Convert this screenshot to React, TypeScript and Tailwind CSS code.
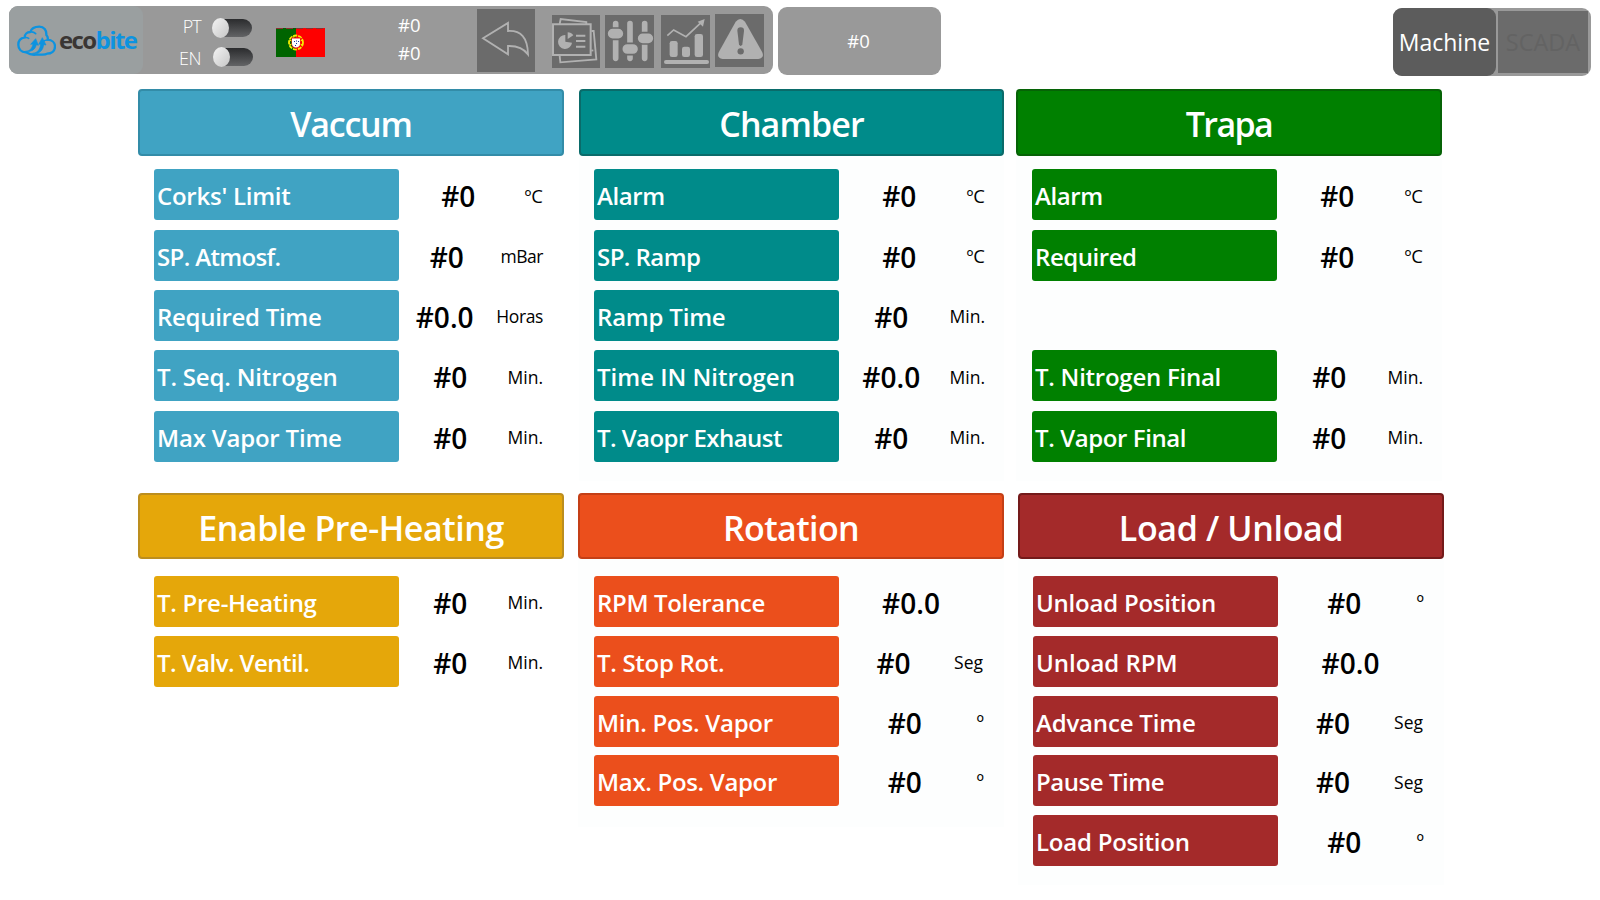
import type { ReactNode } from "react";

type Row = { label: string; track?: string; value: string; unit?: string; unitTrack?: string } | null;

type PanelProps = {
  title: string;
  titleTrack: string;
  size: string;
  header: string;
  fill: string;
  list: string;
  rows: Row[];
};

function Panel({ title, titleTrack, size, header, fill, list, rows }: PanelProps) {
  return (
    <section className={`shrink-0 ${size}`}>
      <h2
        className={`flex items-center justify-center rounded-[4px] border-2 pt-[3px] text-[34px] leading-none font-semibold text-white ${header}`}
      >
        <span className={titleTrack}>{title}</span>
      </h2>
      <div className={`flex flex-col ${list}`}>
        {rows.map((row, i) =>
          row ? (
            <div key={i} className="flex h-[51px] items-center">
              <div
                className={`flex h-full w-[245px] shrink-0 items-center rounded-[3px] pt-[3px] pl-[3px] text-[24px] leading-none font-semibold whitespace-nowrap text-white ${fill}`}
              >
                <span className={row.track}>{row.label}</span>
              </div>
              <div className="flex-1 pt-[3px] text-center text-[28px] leading-none font-semibold">{row.value}</div>
              {row.unit && (
                <div className="pt-[3px] pl-[6px] text-[17.5px] leading-none whitespace-nowrap">
                  <span className={row.unitTrack}>{row.unit}</span>
                </div>
              )}
            </div>
          ) : (
            <div key={i} className="h-[51px]" />
          ),
        )}
      </div>
    </section>
  );
}

function Toggle() {
  return (
    <span className="relative block h-[20px] w-[40px]">
      <span className="absolute inset-y-px right-0 left-[2px] rounded-[9px] bg-linear-to-b from-[#2b2c2e] to-[#636466]" />
      <span className="absolute top-0 left-0 h-[20px] w-[17px] rounded-[50%] bg-linear-to-br from-[#f4f4f4] to-[#c6c6c6]" />
    </span>
  );
}

function IconButton({ className, children }: { className: string; children: ReactNode }) {
  return <button className={`shrink-0 bg-[#6b6b6b] ${className}`}>{children}</button>;
}

function Logo() {
  return (
    <div className="flex h-[68px] w-[134px] items-center rounded-[9px] bg-[#9a9fa0] pl-[8px]">
      <svg className="mt-px shrink-0" width="39" height="31" viewBox="50 76 117 93" fill="none" stroke="#0d93e0" strokeWidth="7" strokeLinecap="round" strokeLinejoin="round">
        <path d="M77 158C62 157 54 147 54 135c0-12 8-20 19-22 0-9 7-16 17-16 3-10 14-16 27-16 14 0 22 10 21 25 5 5 5 10 4 14 13 1 22 9 22 20 0 14-11 22-24 22-5 3-21 4-29 2-11 3-22 1-34-6z" />
        <path d="M91 97c6-1 11 1 15 5M74 114c4-1 8 0 11 2M142 121c-6 0-10 1-13 4" strokeWidth="5" />
        <path d="M76 155c13-1 19-8 22-22l-7 1 15-17 8 20-6-2c-3 14-13 22-32 20z" fill="#0d93e0" strokeWidth="2" />
        <path d="M98 161c14-2 21-11 23-28l-6 1 11-20 11 22-7-1c-2 18-13 28-32 26z" fill="#0d93e0" strokeWidth="2" />
      </svg>
      <span className="ml-[3px] text-[24px] leading-none font-bold tracking-[-1.600px] text-[#3a3634]">
        eco<span className="text-[#0d93e0]">bite</span>
      </span>
    </div>
  );
}

function Flag() {
  return (
    <svg width="49" height="29" viewBox="0 0 49 29" className="shrink-0">
      <rect width="49" height="29" fill="#fe0000" />
      <rect width="20" height="29" fill="#006400" />
      <path d="M0 .5h49" stroke="#8a3030" strokeWidth="1" strokeDasharray="7 3" />
      <circle cx="20" cy="14.5" r="7" fill="none" stroke="#f5ee00" strokeWidth="1.8" strokeDasharray="4 1" />
      <path d="M13 12l14 5M13 17l14-5M17 8l6 13" stroke="#f5ee00" strokeWidth="1" />
      <path d="M15.500 9.500h9v6c0 3-2 5-4.500 5s-4.500-2-4.500-5z" fill="#f01010" />
      <path d="M16 10.500h8v5.500c0 2-2 3.500-4 3.500s-4-1.500-4-3.500z" fill="#fff" />
      <path d="M18 13h1v1h-1zM20 12.500h1v1h-1zM22 13h1v1h-1zM20 15h1v1h-1zM19 17h1v1h-1z" fill="#1b2f9a" />
    </svg>
  );
}

function TopBar() {
  return (
    <header className="flex h-[89px] items-start pt-[6px] pl-[9px] text-white">
      <div className="flex h-[68px] w-[764px] shrink-0 rounded-[9px] bg-[#999999]">
        <Logo />
        <div className="ml-[34px] flex w-[76px] flex-col pt-[12px]">
          <div className="flex h-[20px] items-center justify-end pr-[1px]">
            <span className="mr-[11px] pb-[4px] text-[18px] leading-[20px] font-light tracking-[-0.8px]">PT</span>
            <Toggle />
          </div>
          <div className="mt-[9px] flex h-[20px] items-center justify-end">
            <span className="mr-[12px] pt-px text-[18px] leading-[20px] font-light tracking-[-0.5px]">EN</span>
            <Toggle />
          </div>
        </div>
        <div className="ml-[23px] pt-[22px]">
          <Flag />
        </div>
        <div className="ml-[73px] flex w-[24px] flex-col gap-[8px] pt-[9px] text-[18.500px] leading-[20px] font-medium">
          <span>#0</span>
          <span>#0</span>
        </div>
        <IconButton className="mt-[3px] ml-[55px] h-[63px] w-[58px]">
          <svg width="58" height="63" viewBox="291 27 174 189" fill="none" stroke="#b1b1b1" strokeWidth="5.500">
            <path d="M309 115L384 69V93C423 91 443 112 444 163C430 144 413 137 384 138V163Z" />
          </svg>
        </IconButton>
        <div className="ml-[17px] flex items-start">
          <IconButton className="mt-[9px] h-[53px] w-[48px]">
            <svg width="48" height="53" viewBox="516 45 144 159" fill="none" stroke="#b1b1b1" strokeWidth="6">
              <path d="M519 73H632V165H519Z" />
              <path d="M539 72L542 57L619 66V73M539 167L541 187L649 178L641 93H634M634 152L640 151" strokeWidth="5.500" />
              <path d="M588 107H616M588 123H616M588 140H616" />
              <path d="M556 125V105A21 21 0 1 0 576 128Z" fill="#b1b1b1" stroke="none" />
              <path d="M563 117V97Q574 97 580 106Z" fill="#b1b1b1" stroke="none" />
            </svg>
          </IconButton>
          <IconButton className="mt-[9px] ml-[5px] h-[53px] w-[49px]">
            <svg width="49" height="53" viewBox="675 45 147 159" fill="#b1b1b1">
              <path d="M707 71V175M750 71V175M794 71V175" stroke="#b1b1b1" strokeWidth="17" strokeLinecap="round" />
              <g stroke="#6b6b6b" strokeWidth="5">
                <rect x="681" y="84" width="51" height="34" rx="17" />
                <rect x="725" y="130" width="51" height="34" rx="17" />
                <rect x="771" y="98" width="51" height="34" rx="17" />
              </g>
            </svg>
          </IconButton>
          <IconButton className="mt-[9px] ml-[7px] h-[53px] w-[49px]">
            <svg width="49" height="53" viewBox="843 45 147 159" fill="#b1b1b1">
              <rect x="869" y="123" width="24" height="48" rx="7" />
              <rect x="906" y="140" width="24" height="31" rx="7" />
              <rect x="944" y="102" width="25" height="69" rx="7" />
              <rect x="852" y="180" width="135" height="12" rx="6" />
              <path d="M862 107L881 90L918 110L964 67" fill="none" stroke="#b1b1b1" strokeWidth="5" />
              <path d="M974 57L969 80L953 65Z" />
            </svg>
          </IconButton>
          <IconButton className="mt-[8px] ml-[5px] h-[53px] w-[49px]">
            <svg width="49" height="53" viewBox="1005 42 147 159">
              <path d="M1067 65Q1081 49 1095 65L1146 155Q1155 174 1135 177H1028Q1008 174 1017 155Z" fill="#b1b1b1" />
              <path d="M1072 92Q1072 82 1082 82Q1092 82 1092 92L1087 133Q1082 143 1077 133Z" fill="#6b6b6b" />
              <circle cx="1082" cy="154" r="9.500" fill="#6b6b6b" />
            </svg>
          </IconButton>
        </div>
      </div>
      <div className="mt-px ml-[5px] flex h-[68px] w-[163px] items-center justify-center rounded-[9px] bg-[#999999] pr-[2px] text-[18.500px] leading-none font-medium">
        #0
      </div>
      <div className="mt-[2px] ml-[452px] flex h-[68px] w-[198px] rounded-[9px] bg-[#999999]">
        <button className="w-[103px] rounded-[9px] bg-[#5c5c5c] text-[23px] leading-none">Machine</button>
        <button className="mt-[3px] ml-[2px] h-[62px] w-[90px] bg-[#6b6b6b] pt-[2px] text-[23.500px] leading-none text-[#636363]">
          SCADA
        </button>
      </div>
    </header>
  );
}

export default function App() {
  return (
    <div className="h-[900px] w-[1600px] overflow-hidden bg-white font-['Open_Sans','Noto_Sans',sans-serif] text-black">
      <TopBar />
      <main className="pl-[138px]">
        <div className="flex h-[404px]">
          <Panel
            title="Vaccum"
            titleTrack="tracking-[-1.200px]"
            size="h-[392px] w-[426px]"
            header="h-[67px] bg-[#40a3c3] border-[#338ca8]"
            fill="bg-[#40a3c3]"
            list="gap-[9.400px] pt-[13.200px] pl-[16px] pr-[21px]"
            rows={[
              { label: "Corks' Limit", track: "tracking-[-0.250px]", value: "#0", unit: "ºC", unitTrack: "ml-px text-[18.500px]" },
              { label: "SP. Atmosf.", track: "tracking-[-0.650px]", value: "#0", unit: "mBar", unitTrack: "tracking-[-0.500px]" },
              { label: "Required Time", track: "tracking-[-0.300px]", value: "#0.0", unit: "Horas", unitTrack: "tracking-[-0.400px]" },
              { label: "T. Seq. Nitrogen", track: "tracking-[-0.180px]", value: "#0", unit: "Min." },
              { label: "Max Vapor Time", track: "tracking-[-0.200px]", value: "#0", unit: "Min." },
            ]}
          />
          <Panel
            title="Chamber"
            titleTrack="tracking-[-0.900px]"
            size="ml-[15px] h-[392px] w-[425px] bg-[#fdfefe]"
            header="h-[67px] bg-[#008b8a] border-[#0a6b6a]"
            fill="bg-[#008b8a]"
            list="gap-[9.400px] pt-[13.200px] pl-[15px] pr-[19px]"
            rows={[
              { label: "Alarm", track: "tracking-[-0.400px]", value: "#0", unit: "ºC", unitTrack: "ml-px text-[18.500px]" },
              { label: "SP. Ramp", track: "tracking-[-0.550px]", value: "#0", unit: "ºC", unitTrack: "ml-px text-[18.500px]" },
              { label: "Ramp Time", track: "tracking-[-0.200px]", value: "#0", unit: "Min." },
              { label: "Time IN Nitrogen", value: "#0.0", unit: "Min." },
              { label: "T. Vaopr Exhaust", track: "tracking-[-0.550px]", value: "#0", unit: "Min." },
            ]}
          />
          <Panel
            title="Trapa"
            titleTrack="tracking-[-1.600px]"
            size="ml-[12px] h-[392px] w-[426px] bg-[#fdfefe]"
            header="h-[67px] bg-[#008000] border-[#066306]"
            fill="bg-[#008000]"
            list="gap-[9.400px] pt-[13.200px] pl-[16px] pr-[19px]"
            rows={[
              { label: "Alarm", track: "tracking-[-0.400px]", value: "#0", unit: "ºC", unitTrack: "ml-px text-[18.500px]" },
              { label: "Required", track: "tracking-[-0.450px]", value: "#0", unit: "ºC", unitTrack: "ml-px text-[18.500px]" },
              null,
              { label: "T. Nitrogen Final", track: "tracking-[-0.250px]", value: "#0", unit: "Min." },
              { label: "T. Vapor Final", track: "tracking-[-0.400px]", value: "#0", unit: "Min." },
            ]}
          />
        </div>
        <div className="flex items-start">
          <Panel
            title="Enable Pre-Heating"
            titleTrack="tracking-[-0.450px]"
            size="w-[426px]"
            header="h-[66px] bg-[#e5a70a] border-[#bc8e1e]"
            fill="bg-[#e5a70a]"
            list="gap-[8.800px] pt-[17px] pl-[16px] pr-[21px]"
            rows={[
              { label: "T. Pre-Heating", track: "tracking-[-0.280px]", value: "#0", unit: "Min." },
              { label: "T. Valv. Ventil.", track: "tracking-[-0.550px]", value: "#0", unit: "Min." },
            ]}
          />
          <Panel
            title="Rotation"
            titleTrack="tracking-[-0.600px]"
            size="ml-[14px] h-[334px] w-[426px] bg-[#fdfefe]"
            header="h-[66px] bg-[#eb4f1c] border-[#c43f16]"
            fill="bg-[#eb4f1c]"
            list="gap-[8.800px] pt-[17px] pl-[16px] pr-[21px]"
            rows={[
              { label: "RPM Tolerance", track: "tracking-[-0.350px]", value: "#0.0" },
              { label: "T. Stop Rot.", track: "tracking-[-0.300px]", value: "#0", unit: "Seg" },
              { label: "Min. Pos. Vapor", track: "tracking-[-0.250px]", value: "#0", unit: "º", unitTrack: "text-[20px] -mr-px" },
              { label: "Max. Pos. Vapor", track: "tracking-[-0.320px]", value: "#0", unit: "º", unitTrack: "text-[20px] -mr-px" },
            ]}
          />
          <Panel
            title="Load / Unload"
            titleTrack="tracking-[-0.350px]"
            size="ml-[14px] h-[392px] w-[426px] bg-[#fdfefe]"
            header="h-[66px] bg-[#a42a2a] border-[#741a1a]"
            fill="bg-[#a42a2a]"
            list="gap-[8.800px] pt-[17px] pl-[15px] pr-[21px]"
            rows={[
              { label: "Unload Position", track: "tracking-[-0.230px]", value: "#0", unit: "º", unitTrack: "text-[20px] -mr-px" },
              { label: "Unload RPM", value: "#0.0" },
              { label: "Advance Time", track: "tracking-[-0.180px]", value: "#0", unit: "Seg" },
              { label: "Pause Time", track: "tracking-[-0.450px]", value: "#0", unit: "Seg" },
              { label: "Load Position", track: "tracking-[-0.230px]", value: "#0", unit: "º", unitTrack: "text-[20px] -mr-px" },
            ]}
          />
        </div>
      </main>
    </div>
  );
}
